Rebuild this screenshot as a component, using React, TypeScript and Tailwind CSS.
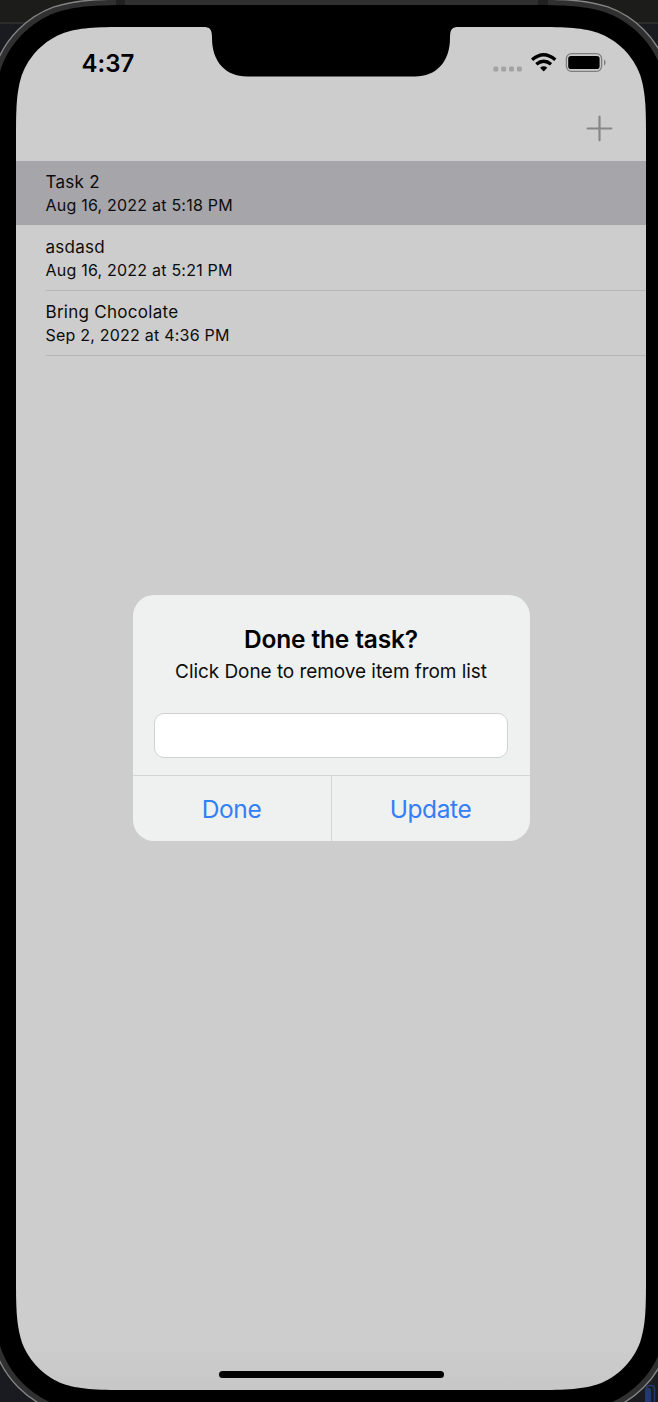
import React from "react";

type Task = { title: string; date: string };

const tasks: Task[] = [
  { title: "Task 2", date: "Aug 16, 2022 at 5:18 PM" },
  { title: "asdasd", date: "Aug 16, 2022 at 5:21 PM" },
  { title: "Bring Chocolate", date: "Sep 2, 2022 at 4:36 PM" },
];

// Rounded rectangle with continuous-curvature corners.
function squircle(l: number, t: number, r: number, b: number, q: number) {
  const A = 1.528665 * q, B = 1.088493 * q, C = 0.868407 * q, D = 0.631494 * q;
  const E = 0.074911 * q, F = 0.372824 * q, G = 0.16906 * q;
  return [
    `M${l + A} ${t}H${r - A}`,
    `C${r - B} ${t} ${r - C} ${t} ${r - D} ${t + E}`,
    `C${r - F} ${t + G} ${r - G} ${t + F} ${r - E} ${t + D}`,
    `C${r} ${t + C} ${r} ${t + B} ${r} ${t + A}V${b - A}`,
    `C${r} ${b - B} ${r} ${b - C} ${r - E} ${b - D}`,
    `C${r - G} ${b - F} ${r - F} ${b - G} ${r - D} ${b - E}`,
    `C${r - C} ${b} ${r - B} ${b} ${r - A} ${b}H${l + A}`,
    `C${l + B} ${b} ${l + C} ${b} ${l + D} ${b - E}`,
    `C${l + F} ${b - G} ${l + G} ${b - F} ${l + E} ${b - D}`,
    `C${l} ${b - C} ${l} ${b - B} ${l} ${b - A}V${t + A}`,
    `C${l} ${t + B} ${l} ${t + C} ${l + E} ${t + D}`,
    `C${l + G} ${t + F} ${l + F} ${t + G} ${l + D} ${t + E}`,
    `C${l + C} ${t} ${l + B} ${t} ${l + A} ${t}Z`,
  ].join("");
}

function DeviceFrame() {
  return (
    <svg className="absolute inset-0" width="658" height="1402" viewBox="0 0 658 1402" aria-hidden="true">
      <defs>
        <linearGradient id="glass" x1="0" y1="0" x2="0" y2="1">
          <stop offset="0.965" stopColor="#cdcdcd" />
          <stop offset="1" stopColor="#c7c7c7" />
        </linearGradient>
      </defs>
      <rect width="658" height="1402" fill="#1a1b20" />
      <rect width="658" height="22" fill="#1c1c1a" />
      <rect y="22" width="658" height="2" fill="#2c2c2d" />
      <rect x="646.5" y="1385.5" width="8" height="30" rx="3" fill="none" stroke="#203a6c" strokeWidth="1.5" />
      <rect x="645" y="1388" width="6" height="30" rx="2" fill="#203a6c" />
      <path d={squircle(-12, -1, 674, 1418, 104.5)} fill="#303030" stroke="#858585" strokeWidth="1.3" />
      <rect x="116" y="0" width="9" height="6" fill="#202020" />
      <rect x="538" y="0" width="10" height="6" fill="#202020" />
      <path d={squircle(-6, 5, 668, 1412, 98.5)} fill="#000" />
      <path d={squircle(16, 27, 646, 1390, 76.5)} fill="url(#glass)" />
      <path d="M203 26V27C210 27 212 29 212 38C212 62 226 76.500 247 76.500H415C436 76.500 450 62 450 38C450 29 452 27 459 27V26Z" fill="#000" />
    </svg>
  );
}

function StatusIcons() {
  return (
    <svg width="114" height="22" viewBox="0 0 114 22" aria-hidden="true">
      {[0, 1, 2, 3].map((i) => (
        <rect key={i} x={1.3 + i * 7.85} y="14.500" width="5" height="5" rx="1.500" fill="#a3a3a3" />
      ))}
      <g fill="none" stroke="#000" strokeWidth="3.300">
        <path d="M40.100 7.800Q51.700 -2.300 63.300 7.800" />
        <path d="M44.300 12.200Q51.700 6.200 59.100 12.200" />
      </g>
      <path d="M48.100 15.700Q51.700 12.800 55.300 15.700L52.200 18.900Q51.700 19.400 51.200 18.900Z" fill="#000" />
      <rect x="74.400" y="1.700" width="35.200" height="17.600" rx="5" fill="none" stroke="#7e7e7e" strokeWidth="1.300" />
      <rect x="76.200" y="4" width="31.400" height="13" rx="2.800" fill="#000" />
      <path d="M112 7.500C114 8.300 114 12.600 112 13.400Z" fill="#7e7e7e" />
    </svg>
  );
}

function TaskRow({ task, selected }: { task: Task; selected: boolean }) {
  return (
    <li className={selected ? "mb-px h-[64px] bg-[#a6a5aa] pl-[29.500px]" : "h-[65px] pl-[29.500px]"}>
      <div className={selected ? "h-full pt-[10px]" : "h-full border-b border-[#b6b6b8] pt-[10px]"}>
        <p className="text-[17px] leading-[22px] tracking-[0.280px]">{task.title}</p>
        <p className="mt-px text-[16px] leading-[23px] tracking-[0.220px]">{task.date}</p>
      </div>
    </li>
  );
}

export default function App() {
  return (
    <div className="relative h-[1402px] w-[658px] overflow-hidden font-['Inter',sans-serif] text-[#0c0c0c]">
      <DeviceFrame />
      <main className="relative ml-4 flex h-[1402px] w-[630px] flex-col pt-[27px]">
        <header className="flex h-[72px] items-center justify-between pl-[65.500px] pr-[40px]">
          <time className="pt-px text-[24px] font-semibold leading-7 tracking-[0.050px] text-black">4:37</time>
          <StatusIcons />
        </header>
        <nav className="flex h-[62px] justify-end pr-[33px] pt-[16px]">
          <button aria-label="Add task" className="size-[27px]">
            <svg width="27" height="27" viewBox="0 0 27 27" fill="none" stroke="#878787" strokeWidth="2.200" strokeLinecap="round">
              <path d="M13.500 1.700V25.300M1.700 13.500H25.300" />
            </svg>
          </button>
        </nav>
        <ul>
          {tasks.map((task, i) => (
            <TaskRow key={task.title} task={task} selected={i === 0} />
          ))}
        </ul>
        <div className="mt-auto mb-[24px] ml-[202.500px] h-[7px] w-[225px] rounded-full bg-black" />
      </main>

      <div role="dialog" className="absolute left-[132.500px] top-[595px] flex h-[246px] w-[397px] flex-col overflow-hidden rounded-[21px] bg-[#eff1f1] text-center">
        <div className="flex h-[180px] flex-col px-[21.500px] pt-[29px]">
          <h2 className="whitespace-nowrap text-[24.500px] font-semibold leading-[30px] tracking-[-0.150px] text-black">Done the task?</h2>
          <p className="mt-[6px] whitespace-nowrap text-[19px] leading-[24px] tracking-[-0.060px]">Click Done to remove item from list</p>
          <input aria-label="Task title" className="mt-[29px] h-[45px] w-full rounded-[10px] border border-[#d0d1d2] bg-white px-2 outline-none" />
        </div>
        <div className="grid flex-1 grid-cols-[199px_1fr] border-t-[1.500px] border-[#d3d5d5] text-[24.500px] tracking-[-0.400px] text-[#347ef6]">
          <button className="border-r border-[#d3d5d5] pt-[2px]">Done</button>
          <button className="pt-[2px]">Update</button>
        </div>
      </div>
    </div>
  );
}
